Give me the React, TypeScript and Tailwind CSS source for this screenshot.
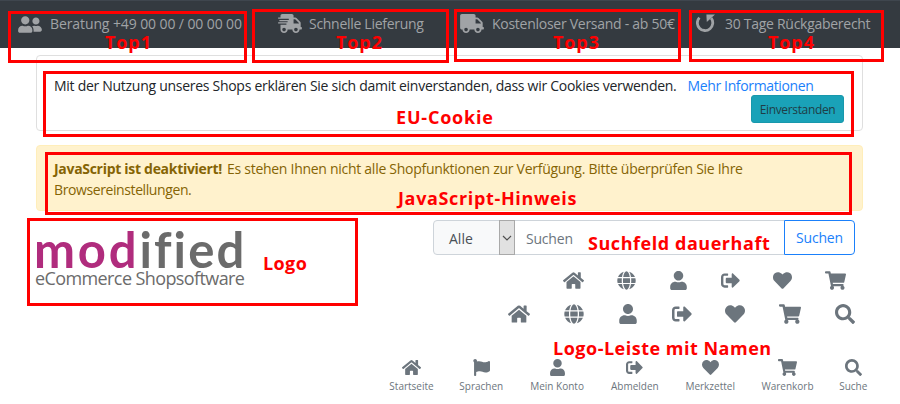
import type { ReactNode } from "react";
import {
  FaFlag,
  FaGlobe,
  FaHeart,
  FaHome,
  FaSearch,
  FaShippingFast,
  FaShoppingCart,
  FaSignOutAlt,
  FaTruck,
  FaUser,
  FaUserFriends,
} from "react-icons/fa";

function ReturnIcon() {
  return (
    <svg viewBox="0 0 20 20" className="h-5 w-5 shrink-0" fill="none">
      <path d="M3.4 4.6A7.7 7.7 0 1 0 15.2 5.2" stroke="currentColor" strokeWidth="2.8" />
      <path d="M10.4 1.6H19L10.8 9Z" fill="currentColor" />
    </svg>
  );
}

function Frame({ className }: { className: string }) {
  return <div className={`pointer-events-none absolute border-[3px] border-[#ff0000] ${className}`} />;
}

function Note({ className, children }: { className: string; children: ReactNode }) {
  return (
    <span className={`absolute text-lg leading-5 font-bold whitespace-nowrap text-[#ff0000] ${className}`}>
      {children}
    </span>
  );
}

function TopBar() {
  return (
    <header className="flex h-12 items-start border-t border-[#3f464e] bg-[#343a40] pt-3 pl-[18px] leading-[22px] text-[#a0a3a6]">
      <div className="flex w-[260px] items-center">
        <FaUserFriends className="h-[19px] w-6 shrink-0" />
        <span className="ml-2 tracking-[-0.1px]">Beratung +49 00 00 / 00 00 00</span>
      </div>
      <div className="flex w-[182px] items-center">
        <FaShippingFast className="-mt-px h-[19px] w-6 shrink-0" />
        <span className="ml-[7px] tracking-[-0.29px]">Schnelle Lieferung</span>
      </div>
      <div className="flex w-[236px] items-center">
        <FaTruck className="-mt-px h-[19px] w-6 shrink-0" />
        <span className="ml-2 tracking-[-0.27px]">Kostenloser Versand - ab 50€</span>
      </div>
      <div className="flex items-center">
        <span className="-mt-[3px]">
          <ReturnIcon />
        </span>
        <span className="ml-[9px] tracking-[-0.28px]">30 Tage Rückgaberecht</span>
      </div>
    </header>
  );
}

function CookieCard() {
  return (
    <section className="h-[76px] rounded border border-[#dfdfdf] pt-5 pr-[18px] pl-[17px]">
      <p className="h-[19px] leading-5 whitespace-nowrap text-[#212529]">
        <span className="tracking-[-0.28px]">
          Mit der Nutzung unseres Shops erklären Sie sich damit einverstanden, dass wir Cookies verwenden.
        </span>
        <a className="ml-[11px] tracking-[-0.36px] text-[#1a80fb]">Mehr Informationen</a>
      </p>
      <div className="flex justify-end">
        <button className="h-7 w-[93px] rounded-[3px] border border-[#1898ac] bg-[#1aa2b8] pt-px text-xs tracking-[-0.35px] text-[#1f3d46]">
          Einverstanden
        </button>
      </div>
    </section>
  );
}

function ScriptAlert() {
  return (
    <section className="mt-[14px] h-[66px] rounded border border-[#ffeeba] bg-[#fff2cd] pt-3 pl-[17px] leading-[21px] whitespace-nowrap text-[#856404]">
      <p>
        <strong className="mr-[5px] font-bold tracking-[-0.3px]">JavaScript ist deaktiviert!</strong>
        <span className="tracking-[-0.28px]">
          Es stehen Ihnen nicht alle Shopfunktionen zur Verfügung. Bitte überprüfen Sie Ihre
        </span>
      </p>
      <p className="tracking-[-0.4px]">Browsereinstellungen.</p>
    </section>
  );
}

function Logo() {
  return (
    <div className="w-[260px] shrink-0 whitespace-nowrap text-[#6b6b6b]">
      <div className="-ml-[2px] h-[43px] pt-[5px] font-['Lato',sans-serif] text-[49px] leading-[48px] font-bold">
        <span className="tracking-[2.8px] text-[#b02c7d]">mod</span>
        <span className="tracking-[2.1px]">ified</span>
      </div>
      <div className="mt-[5px] -ml-px text-lg leading-5 tracking-[-0.6px]">eCommerce Shopsoftware</div>
    </div>
  );
}

function SearchBar() {
  return (
    <div className="flex h-[35px] w-[422px]">
      <div className="flex w-[82px] rounded-l border border-[#ced4da] bg-[#f8f9fa]">
        <span className="flex-1 pl-[15px] leading-[35px] text-[#495057]">Alle</span>
        <span className="-my-px -mr-px flex w-4 items-center justify-center border border-[#a9a9a9] bg-[#e1e1e1]">
          <svg viewBox="0 0 10 6" className="h-[6px] w-2.5" fill="none" stroke="#505050" strokeWidth="1.2">
            <path d="M1 1L5 5L9 1" />
          </svg>
        </span>
      </div>
      <div className="flex-1 border-y border-[#ced4da] pl-[11px] leading-[35px] tracking-[-0.2px] text-[#6c757d]">
        Suchen
      </div>
      <button className="w-[71px] rounded-r border border-[#1a80fb] pt-px tracking-[-0.2px] text-[#1a80fb]">Suchen</button>
    </div>
  );
}

function IconRows() {
  return (
    <>
      <nav className="mt-4 mr-[9px] flex h-5 items-center gap-[33px]">
        <FaHome className="h-[19px] w-[21px]" />
        <FaGlobe className="h-[19px] w-[19px]" />
        <FaUser className="h-[19px] w-[19px]" />
        <FaSignOutAlt className="h-[19px] w-[19px]" />
        <FaHeart className="h-[19px] w-[19px]" />
        <FaShoppingCart className="h-[19px] w-[21px]" />
      </nav>
      <nav className="mt-[14px] flex h-5 items-center gap-[33.8px]">
        <FaHome className="h-5 w-[22px]" />
        <FaGlobe className="h-5 w-5" />
        <FaUser className="h-5 w-5" />
        <FaSignOutAlt className="h-5 w-5" />
        <FaHeart className="h-5 w-5" />
        <FaShoppingCart className="h-5 w-[22px]" />
        <FaSearch className="h-5 w-5" />
      </nav>
    </>
  );
}

const named = [
  { label: "Startseite", Icon: FaHome, width: "w-[43px]" },
  { label: "Sprachen", Icon: FaFlag, width: "w-[44px]" },
  { label: "Mein Konto", Icon: FaUser, width: "w-[55px]" },
  { label: "Abmelden", Icon: FaSignOutAlt, width: "w-[48px]" },
  { label: "Merkzettel", Icon: FaHeart, width: "w-[50px]" },
  { label: "Warenkorb", Icon: FaShoppingCart, width: "w-[52px]" },
  { label: "Suche", Icon: FaSearch, width: "w-[27px]" },
];

function NamedIcons() {
  return (
    <nav className="mt-[35px] ml-[390px] flex gap-[26.3px] text-[10px] leading-4 text-[#6c757d]">
      {named.map(({ label, Icon, width }) => (
        <div key={label} className={`flex shrink-0 flex-col items-center ${width}`}>
          <Icon className="h-[17px] w-[19px]" />
          <span className="mt-0.5 whitespace-nowrap">{label}</span>
        </div>
      ))}
    </nav>
  );
}

export default function App() {
  return (
    <div className="relative h-[404px] w-[900px] overflow-hidden bg-white font-['Open_Sans','Noto_Sans',sans-serif] text-sm">
      <TopBar />
      <main className="mt-[7px] ml-9 w-[827px]">
        <CookieCard />
        <ScriptAlert />
        <div className="mt-[9px] flex h-[104px] justify-between pr-2">
          <Logo />
          <div className="flex flex-col items-end text-[#6c757d]">
            <SearchBar />
            <IconRows />
          </div>
        </div>
      </main>
      <NamedIcons />

      <Frame className="top-[11px] left-2 h-[52px] w-[239px]" />
      <Frame className="top-[9px] left-[252px] h-[54px] w-[197px]" />
      <Frame className="top-[9px] left-[454px] h-[53px] w-[227px]" />
      <Frame className="top-[10px] left-[689px] h-[52px] w-[195px]" />
      <Frame className="top-[71px] left-[43px] h-[66px] w-[811px]" />
      <Frame className="top-[152px] left-[45px] h-[63px] w-[807px]" />
      <Frame className="top-[218px] left-[27px] h-[88px] w-[331px]" />

      <Note className="top-8 left-[105px] tracking-[0.9px]">Top1</Note>
      <Note className="top-8 left-[336px] tracking-[0.9px]">Top2</Note>
      <Note className="top-8 left-[553px] tracking-[0.9px]">Top3</Note>
      <Note className="top-8 left-[768px] tracking-[0.9px]">Top4</Note>
      <Note className="top-[107px] left-[396px] tracking-[0.8px]">EU-Cookie</Note>
      <Note className="top-[188px] left-[398px] tracking-[0.65px]">JavaScript-Hinweis</Note>
      <Note className="top-[253px] left-[263px] tracking-[0.4px]">Logo</Note>
      <Note className="top-[233px] left-[588px] tracking-[0.55px]">Suchfeld dauerhaft</Note>
      <Note className="top-[338px] left-[553px] tracking-[0.5px]">Logo-Leiste mit Namen</Note>
    </div>
  );
}
